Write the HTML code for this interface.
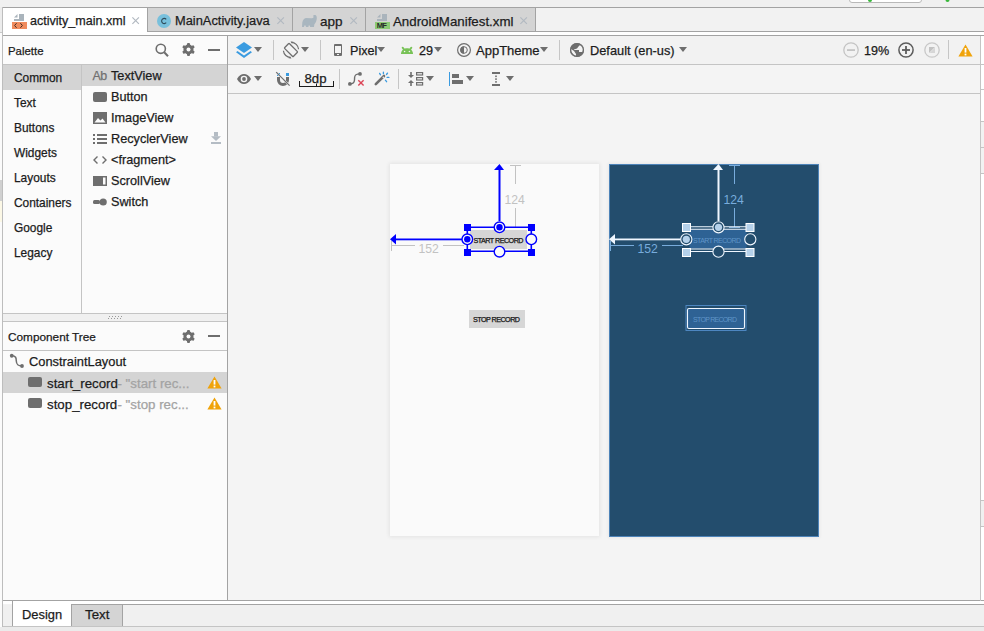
<!DOCTYPE html>
<html><head><meta charset="utf-8"><style>
html,body{margin:0;padding:0;}
body{width:984px;height:631px;position:relative;overflow:hidden;background:#f2f2f2;font-family:"Liberation Sans",sans-serif;}
.t{position:absolute;white-space:pre;font-family:"Liberation Sans",sans-serif;-webkit-text-stroke:0.25px currentColor;}
svg{overflow:visible;}
</style></head><body>
<div style="position:absolute;left:0px;top:0px;width:984px;height:7px;background:#f0f0f0;"></div>
<div style="position:absolute;left:849px;top:-4px;width:73px;height:7px;background:#ffffff;border:1px solid #b9b9b9;border-radius:3px;box-sizing:border-box;"></div>
<svg style="position:absolute;left:866px;top:-2px;" width="80" height="5" viewBox="0 0 80 5"><circle cx="4" cy="2" r="2" fill="#38b83a"/><rect x="18" y="0" width="1" height="2" fill="#333"/><rect x="26" y="0" width="1" height="2" fill="#333"/><circle cx="81.5" cy="2" r="2" fill="#38b83a"/></svg>
<div style="position:absolute;left:2px;top:7px;width:982px;height:1px;background:#a3a3a3;"></div>
<div style="position:absolute;left:0px;top:7px;width:2px;height:25px;background:#ececec;"></div>
<div style="position:absolute;left:0px;top:32px;width:2px;height:1px;background:#c8c8c8;"></div>
<div style="position:absolute;left:0px;top:33px;width:2px;height:147px;background:#fbfbfb;"></div>
<div style="position:absolute;left:0px;top:180px;width:2px;height:21px;background:#d0d0d0;"></div>
<div style="position:absolute;left:0px;top:201px;width:2px;height:21px;background:#fcf8e6;"></div>
<div style="position:absolute;left:0px;top:222px;width:2px;height:409px;background:#fbfbfb;"></div>
<div style="position:absolute;left:2px;top:8px;width:982px;height:24px;background:#f2f2f2;"></div>
<div style="position:absolute;left:2px;top:31px;width:982px;height:1px;background:#a3a3a3;"></div>
<div style="position:absolute;left:2px;top:32px;width:982px;height:3px;background:#ffffff;"></div>
<div style="position:absolute;left:2px;top:35px;width:982px;height:1px;background:#a3a3a3;"></div>
<div style="position:absolute;left:2px;top:7px;width:1px;height:624px;background:#bdbdbd;"></div>
<div style="position:absolute;left:3px;top:8px;width:144px;height:27px;background:#ffffff;"></div>
<div style="position:absolute;left:147px;top:8px;width:1px;height:24px;background:#a3a3a3;"></div>
<div style="position:absolute;left:148px;top:8px;width:144px;height:23px;background:#d4d4d4;"></div>
<div style="position:absolute;left:292px;top:8px;width:1px;height:24px;background:#a3a3a3;"></div>
<div style="position:absolute;left:293px;top:8px;width:72px;height:23px;background:#d4d4d4;"></div>
<div style="position:absolute;left:365px;top:8px;width:1px;height:24px;background:#a3a3a3;"></div>
<div style="position:absolute;left:366px;top:8px;width:169px;height:23px;background:#d4d4d4;"></div>
<div style="position:absolute;left:535px;top:8px;width:1px;height:24px;background:#a3a3a3;"></div>
<svg style="position:absolute;left:12px;top:14px;" width="16" height="15" viewBox="0 0 16 15"><path d="M2 3.5L5.5 0V3.5Z" fill="#aab4bc"/><path d="M7 0H12V7H2V5H7Z" fill="#aab4bc"/><rect x="0" y="8" width="15" height="7" fill="#f08c5e"/><path d="M4.6 9.2L2.6 11.5L4.6 13.8M8.4 9.2L10.4 11.5L8.4 13.8" stroke="#4a3128" stroke-width="1" fill="none"/></svg>
<div class="t" style="left:30px;top:15.38px;font-size:12.55px;line-height:12.55px;color:#1c1c1c;">activity_main.xml</div>
<svg style="position:absolute;left:132px;top:17px;" width="8" height="8" viewBox="0 0 8 8"><path d="M0.4 0.4L6.9 6.9M6.9 0.4L0.4 6.9" stroke="#b2b9c1" stroke-width="1.15"/></svg>
<svg style="position:absolute;left:157px;top:14px;" width="14" height="14" viewBox="0 0 14 14"><circle cx="7" cy="7" r="7" fill="#78c0dc"/><path d="M9.2 5.3A2.6 2.6 0 1 0 9.2 8.7" stroke="#2f4b5a" stroke-width="1.1" fill="none"/></svg>
<div class="t" style="left:175px;top:15.12px;font-size:12.85px;line-height:12.85px;color:#1c1c1c;">MainActivity.java</div>
<svg style="position:absolute;left:277px;top:17px;" width="8" height="8" viewBox="0 0 8 8"><path d="M0.4 0.4L6.9 6.9M6.9 0.4L0.4 6.9" stroke="#b2b9c1" stroke-width="1.15"/></svg>
<svg style="position:absolute;left:299px;top:12px;" width="22" height="18" viewBox="0 0 22 18"><path d="M3 15L3.3 10.5C3.8 8 5 6.3 7 6L12.5 6.2C13.5 6.3 14.2 6 14.5 5.5L14.4 4.2C14.2 3.4 14.5 2.9 15.2 2.9L16.3 3.1C17.5 3.5 17.9 5 17.8 6.5C17.6 9 16.5 11 15.3 12.5L15 15H11.2L10.8 13.6H9.6L9.4 15H7L6.6 13.6H5.3L5 15Z" fill="#a9b6bf"/></svg>
<div class="t" style="left:320px;top:14.57px;font-size:13.5px;line-height:13.5px;color:#1c1c1c;">app</div>
<svg style="position:absolute;left:350px;top:17px;" width="8" height="8" viewBox="0 0 8 8"><path d="M0.4 0.4L6.9 6.9M6.9 0.4L0.4 6.9" stroke="#b2b9c1" stroke-width="1.15"/></svg>
<svg style="position:absolute;left:375px;top:14px;" width="16" height="15" viewBox="0 0 16 15"><path d="M2 3.5L5.5 0V3.5Z" fill="#aab4bc"/><path d="M7 0H12V7H2V5H7Z" fill="#aab4bc"/><rect x="0" y="8" width="15" height="7" fill="#8ccb76"/><text x="1.8" y="14.2" font-family="Liberation Sans" font-weight="bold" font-size="7.6" fill="#2b2b2b" textLength="10">MF</text></svg>
<div class="t" style="left:393px;top:14.74px;font-size:13.3px;line-height:13.3px;color:#1c1c1c;">AndroidManifest.xml</div>
<svg style="position:absolute;left:520px;top:17px;" width="8" height="8" viewBox="0 0 8 8"><path d="M0.4 0.4L6.9 6.9M6.9 0.4L0.4 6.9" stroke="#b2b9c1" stroke-width="1.15"/></svg>
<div style="position:absolute;left:3px;top:36px;width:224px;height:28px;background:#fbfbfb;"></div>
<div style="position:absolute;left:227px;top:36px;width:1px;height:565px;background:#a3a3a3;"></div>
<div style="position:absolute;left:3px;top:64px;width:224px;height:1px;background:#c4c4c4;"></div>
<div class="t" style="left:8px;top:46.35px;font-size:11.4px;line-height:11.4px;color:#1c1c1c;">Palette</div>
<svg style="position:absolute;left:155px;top:43px;" width="14" height="15" viewBox="0 0 14 15"><circle cx="5.8" cy="5.8" r="4.6" stroke="#6e6e6e" stroke-width="1.6" fill="none"/><path d="M9.2 9.3L13 13.3" stroke="#6e6e6e" stroke-width="2" /></svg>
<svg style="position:absolute;left:182px;top:43px;" width="13" height="13" viewBox="0 0 13 13"><g transform="translate(6.5 6.5)" fill="#6e6e6e"><circle r="5"/><rect x="-1.5" y="-6.5" width="3" height="3" rx="1" transform="rotate(0)"/><rect x="-1.5" y="-6.5" width="3" height="3" rx="1" transform="rotate(60)"/><rect x="-1.5" y="-6.5" width="3" height="3" rx="1" transform="rotate(120)"/><rect x="-1.5" y="-6.5" width="3" height="3" rx="1" transform="rotate(180)"/><rect x="-1.5" y="-6.5" width="3" height="3" rx="1" transform="rotate(240)"/><rect x="-1.5" y="-6.5" width="3" height="3" rx="1" transform="rotate(300)"/><circle r="2" fill="#fbfbfb"/></g></svg>
<div style="position:absolute;left:208px;top:49px;width:12px;height:2px;background:#6e6e6e;"></div>
<div style="position:absolute;left:3px;top:65px;width:78px;height:249px;background:#fbfbfb;"></div>
<div style="position:absolute;left:81px;top:65px;width:1px;height:249px;background:#c4c4c4;"></div>
<div style="position:absolute;left:82px;top:65px;width:145px;height:249px;background:#fbfbfb;"></div>
<div style="position:absolute;left:3px;top:65px;width:78px;height:25px;background:#d4d4d4;"></div>
<div class="t" style="left:14px;top:72.93px;font-size:11.9px;line-height:11.9px;color:#1c1c1c;">Common</div>
<div class="t" style="left:14px;top:97.93px;font-size:11.9px;line-height:11.9px;color:#1c1c1c;">Text</div>
<div class="t" style="left:14px;top:122.93px;font-size:11.9px;line-height:11.9px;color:#1c1c1c;">Buttons</div>
<div class="t" style="left:14px;top:147.93px;font-size:11.9px;line-height:11.9px;color:#1c1c1c;">Widgets</div>
<div class="t" style="left:14px;top:172.93px;font-size:11.9px;line-height:11.9px;color:#1c1c1c;">Layouts</div>
<div class="t" style="left:14px;top:197.93px;font-size:11.9px;line-height:11.9px;color:#1c1c1c;">Containers</div>
<div class="t" style="left:14px;top:222.93px;font-size:11.9px;line-height:11.9px;color:#1c1c1c;">Google</div>
<div class="t" style="left:14px;top:247.93px;font-size:11.9px;line-height:11.9px;color:#1c1c1c;">Legacy</div>
<div style="position:absolute;left:82px;top:65px;width:145px;height:21px;background:#d4d4d4;"></div>
<div class="t" style="left:111px;top:70.25px;font-size:12.7px;line-height:12.7px;color:#1c1c1c;">TextView</div>
<div class="t" style="left:111px;top:91.25px;font-size:12.7px;line-height:12.7px;color:#1c1c1c;">Button</div>
<div class="t" style="left:111px;top:112.25px;font-size:12.7px;line-height:12.7px;color:#1c1c1c;">ImageView</div>
<div class="t" style="left:111px;top:133.25px;font-size:12.7px;line-height:12.7px;color:#1c1c1c;">RecyclerView</div>
<div class="t" style="left:111px;top:154.25px;font-size:12.7px;line-height:12.7px;color:#1c1c1c;">&lt;fragment&gt;</div>
<div class="t" style="left:111px;top:175.25px;font-size:12.7px;line-height:12.7px;color:#1c1c1c;">ScrollView</div>
<div class="t" style="left:111px;top:196.25px;font-size:12.7px;line-height:12.7px;color:#1c1c1c;">Switch</div>
<div class="t" style="left:92.5px;top:70.10px;font-size:12.4px;line-height:12.4px;color:#707070;letter-spacing:-0.4px;">Ab</div>
<div style="position:absolute;left:93px;top:92px;width:14px;height:10px;background:#6e6e6e;border-radius:2px;"></div>
<svg style="position:absolute;left:93px;top:112px;" width="14" height="12" viewBox="0 0 14 12"><rect x="0" y="0" width="14" height="12" fill="#6e6e6e"/><path d="M1.5 10.5L5 6L7.5 8.5L9.5 6.5L12.5 10.5Z" fill="#fbfbfb"/></svg>
<svg style="position:absolute;left:93px;top:133px;" width="14" height="12" viewBox="0 0 14 12"><g fill="#6e6e6e"><rect x="0" y="1" width="2" height="2"/><rect x="4" y="1" width="10" height="2"/><rect x="0" y="5" width="2" height="2"/><rect x="4" y="5" width="10" height="2"/><rect x="0" y="9" width="2" height="2"/><rect x="4" y="9" width="10" height="2"/></g></svg>
<svg style="position:absolute;left:93px;top:156px;" width="14" height="8" viewBox="0 0 14 8"><path d="M4.5 0.5L1 4L4.5 7.5M9.5 0.5L13 4L9.5 7.5" stroke="#6e6e6e" stroke-width="1.4" fill="none"/></svg>
<svg style="position:absolute;left:93px;top:176px;" width="14" height="10" viewBox="0 0 14 10"><rect x="0" y="0" width="14" height="10" fill="#6e6e6e"/><rect x="10" y="1.5" width="2.5" height="7" fill="#fbfbfb"/></svg>
<svg style="position:absolute;left:93px;top:198px;" width="14" height="8" viewBox="0 0 14 8"><rect x="0" y="2" width="7" height="4" rx="1.5" fill="#6e6e6e"/><circle cx="10.2" cy="4" r="3.6" fill="#6e6e6e"/></svg>
<svg style="position:absolute;left:211px;top:131px;" width="10" height="14" viewBox="0 0 10 14"><rect x="3" y="1" width="4" height="4.5" fill="#b4bcc4"/><path d="M0 5.2H10L5 10Z" fill="#b4bcc4"/><rect x="0" y="11" width="10" height="2" fill="#b4bcc4"/></svg>
<div style="position:absolute;left:3px;top:313px;width:224px;height:1px;background:#c4c4c4;"></div>
<div style="position:absolute;left:3px;top:314px;width:224px;height:7px;background:#f0f0f0;"></div>
<svg style="position:absolute;left:107px;top:316px;" width="16" height="3" viewBox="0 0 16 3"><rect x="2" y="0" width="1" height="1" fill="#9a9a9a"/><rect x="1" y="2" width="1" height="1" fill="#9a9a9a"/><rect x="5" y="0" width="1" height="1" fill="#9a9a9a"/><rect x="4" y="2" width="1" height="1" fill="#9a9a9a"/><rect x="8" y="0" width="1" height="1" fill="#9a9a9a"/><rect x="7" y="2" width="1" height="1" fill="#9a9a9a"/><rect x="11" y="0" width="1" height="1" fill="#9a9a9a"/><rect x="10" y="2" width="1" height="1" fill="#9a9a9a"/><rect x="14" y="0" width="1" height="1" fill="#9a9a9a"/><rect x="13" y="2" width="1" height="1" fill="#9a9a9a"/></svg>
<div style="position:absolute;left:3px;top:321px;width:224px;height:1px;background:#c4c4c4;"></div>
<div style="position:absolute;left:3px;top:322px;width:224px;height:28px;background:#fbfbfb;"></div>
<div style="position:absolute;left:3px;top:350px;width:224px;height:1px;background:#c4c4c4;"></div>
<div class="t" style="left:8px;top:332.01px;font-size:11.8px;line-height:11.8px;color:#1c1c1c;">Component Tree</div>
<svg style="position:absolute;left:181.5px;top:329.5px;" width="13" height="13" viewBox="0 0 13 13"><g transform="translate(6.5 6.5)" fill="#6e6e6e"><circle r="5"/><rect x="-1.5" y="-6.5" width="3" height="3" rx="1" transform="rotate(0)"/><rect x="-1.5" y="-6.5" width="3" height="3" rx="1" transform="rotate(60)"/><rect x="-1.5" y="-6.5" width="3" height="3" rx="1" transform="rotate(120)"/><rect x="-1.5" y="-6.5" width="3" height="3" rx="1" transform="rotate(180)"/><rect x="-1.5" y="-6.5" width="3" height="3" rx="1" transform="rotate(240)"/><rect x="-1.5" y="-6.5" width="3" height="3" rx="1" transform="rotate(300)"/><circle r="2" fill="#fbfbfb"/></g></svg>
<div style="position:absolute;left:208px;top:335px;width:12px;height:2px;background:#6e6e6e;"></div>
<div style="position:absolute;left:3px;top:351px;width:224px;height:250px;background:#fbfbfb;"></div>
<div style="position:absolute;left:3px;top:372px;width:224px;height:21px;background:#d4d4d4;"></div>
<svg style="position:absolute;left:6px;top:350px;" width="24" height="22" viewBox="0 0 24 22"><path d="M5.75 5.75C10 5.75 10.2 8 10.3 11C10.5 14.5 11.5 16 16 16" stroke="#6e6e6e" stroke-width="1.5" fill="none"/><circle cx="5.75" cy="5.75" r="1.9" fill="#6e6e6e"/><circle cx="16" cy="16" r="1.9" fill="#6e6e6e"/></svg>
<div class="t" style="left:29px;top:356.12px;font-size:12.85px;line-height:12.85px;color:#1c1c1c;">ConstraintLayout</div>
<div style="position:absolute;left:28px;top:377px;width:14px;height:10px;background:#6e6e6e;border-radius:2px;"></div>
<div style="position:absolute;left:28px;top:398px;width:14px;height:10px;background:#6e6e6e;border-radius:2px;"></div>
<div class="t" style="left:47px;top:376.74px;font-size:13.3px;line-height:13.3px;color:#1c1c1c;">start_record</div>
<div class="t" style="left:47px;top:397.74px;font-size:13.3px;line-height:13.3px;color:#1c1c1c;">stop_record</div>
<div class="t" style="left:117.5px;top:376.74px;font-size:13.3px;line-height:13.3px;color:#a3a3a3;">- "start rec...</div>
<div class="t" style="left:117.5px;top:397.74px;font-size:13.3px;line-height:13.3px;color:#a3a3a3;">- "stop rec...</div>
<svg style="position:absolute;left:206.5px;top:375.5px;" width="15" height="13" viewBox="0 0 15 13"><path d="M7.5 0.5L14.6 12.5H0.4Z" fill="#f0a30a"/><rect x="6.6" y="4" width="1.8" height="4.6" fill="#fff"/><rect x="6.6" y="9.6" width="1.8" height="1.8" fill="#fff"/></svg>
<svg style="position:absolute;left:206.5px;top:396.5px;" width="15" height="13" viewBox="0 0 15 13"><path d="M7.5 0.5L14.6 12.5H0.4Z" fill="#f0a30a"/><rect x="6.6" y="4" width="1.8" height="4.6" fill="#fff"/><rect x="6.6" y="9.6" width="1.8" height="1.8" fill="#fff"/></svg>
<div style="position:absolute;left:3px;top:600px;width:981px;height:1px;background:#a3a3a3;"></div>
<div style="position:absolute;left:3px;top:601px;width:981px;height:3px;background:#ffffff;"></div>
<div style="position:absolute;left:12px;top:604px;width:972px;height:1px;background:#a3a3a3;"></div>
<div style="position:absolute;left:3px;top:605px;width:981px;height:21px;background:#f0f0f0;"></div>
<div style="position:absolute;left:3px;top:626px;width:981px;height:1px;background:#c4c4c4;"></div>
<div style="position:absolute;left:0px;top:627px;width:984px;height:4px;background:#ebebeb;"></div>
<div style="position:absolute;left:12px;top:601px;width:1px;height:25px;background:#a3a3a3;"></div>
<div style="position:absolute;left:13px;top:601px;width:58px;height:25px;background:#ffffff;"></div>
<div style="position:absolute;left:71px;top:604px;width:1px;height:22px;background:#a3a3a3;"></div>
<div style="position:absolute;left:72px;top:605px;width:50px;height:21px;background:#d4d4d4;"></div>
<div style="position:absolute;left:122px;top:604px;width:1px;height:22px;background:#a3a3a3;"></div>
<div class="t" style="left:22px;top:609.08px;font-size:12.9px;line-height:12.9px;color:#1c1c1c;">Design</div>
<div class="t" style="left:85px;top:607.74px;font-size:13.3px;line-height:13.3px;color:#1c1c1c;">Text</div>
<div style="position:absolute;left:228px;top:36px;width:753px;height:28px;background:#f2f2f2;"></div>
<div style="position:absolute;left:228px;top:64px;width:756px;height:1px;background:#c4c4c4;"></div>
<div style="position:absolute;left:228px;top:65px;width:753px;height:28px;background:#f4f4f4;"></div>
<div style="position:absolute;left:228px;top:93px;width:753px;height:1px;background:#c4c4c4;"></div>
<div style="position:absolute;left:228px;top:94px;width:753px;height:506px;background:#f4f4f4;"></div>
<div style="position:absolute;left:980px;top:36px;width:1px;height:565px;background:#c4c4c4;"></div>
<div style="position:absolute;left:981px;top:36px;width:3px;height:53px;background:#ffffff;"></div>
<div style="position:absolute;left:981px;top:89px;width:3px;height:1px;background:#c4c4c4;"></div>
<div style="position:absolute;left:981px;top:90px;width:3px;height:31px;background:#ffffff;"></div>
<div style="position:absolute;left:981px;top:121px;width:3px;height:1px;background:#c4c4c4;"></div>
<div style="position:absolute;left:981px;top:122px;width:3px;height:25px;background:#f2f2f2;"></div>
<div style="position:absolute;left:981px;top:147px;width:3px;height:1px;background:#c4c4c4;"></div>
<div style="position:absolute;left:981px;top:148px;width:3px;height:25px;background:#f2f2f2;"></div>
<div style="position:absolute;left:981px;top:173px;width:3px;height:1px;background:#c4c4c4;"></div>
<div style="position:absolute;left:981px;top:174px;width:3px;height:326px;background:#ffffff;"></div>
<div style="position:absolute;left:981px;top:500px;width:3px;height:1px;background:#c4c4c4;"></div>
<div style="position:absolute;left:981px;top:501px;width:3px;height:25px;background:#f0f0f0;"></div>
<div style="position:absolute;left:981px;top:526px;width:3px;height:1px;background:#c4c4c4;"></div>
<div style="position:absolute;left:981px;top:527px;width:3px;height:73px;background:#ffffff;"></div>
<div style="position:absolute;left:981px;top:64px;width:3px;height:1px;background:#c4c4c4;"></div>
<svg style="position:absolute;left:236px;top:42px;" width="16" height="16" viewBox="0 0 16 16"><path d="M8 0L16 5.5L8 11L0 5.5Z" fill="#3a9be0"/><path d="M1.5 9L8 13.5L14.5 9L16 10.2L8 16L0 10.2Z" fill="#3a9be0"/></svg>
<svg style="position:absolute;left:254px;top:47px;" width="8" height="5" viewBox="0 0 8 5"><path d="M0 0H8L4 5Z" fill="#6e6e6e"/></svg>
<div style="position:absolute;left:273px;top:40px;width:1px;height:20px;background:#c6c6c6;"></div>
<svg style="position:absolute;left:280px;top:40px;" width="23" height="20" viewBox="0 0 23 20"><g transform="rotate(-45 11 10)"><rect x="7.6" y="3.8" width="6.8" height="12.4" rx="0.8" stroke="#6e6e6e" stroke-width="1.3" fill="none"/></g><path d="M11.3 2.4A7.6 7.6 0 0 1 18.6 9.2M10.6 17.6A7.6 7.6 0 0 1 3.4 10.8" stroke="#6e6e6e" stroke-width="1.2" fill="none"/><path d="M10.5 1.6L13.5 1.8L12 3.6Z M11.5 18.4L8.5 18.2L10 16.4Z" fill="#6e6e6e"/></svg>
<svg style="position:absolute;left:301px;top:47px;" width="8" height="5" viewBox="0 0 8 5"><path d="M0 0H8L4 5Z" fill="#6e6e6e"/></svg>
<div style="position:absolute;left:320px;top:40px;width:1px;height:20px;background:#c6c6c6;"></div>
<svg style="position:absolute;left:334px;top:44px;" width="8" height="12" viewBox="0 0 8 12"><rect x="0" y="0" width="8" height="12" rx="1" fill="#6e6e6e"/><rect x="1" y="2" width="6" height="7" fill="#f4f4f4"/><rect x="3" y="10" width="2" height="1" fill="#f4f4f4"/></svg>
<div class="t" style="left:350px;top:45.34px;font-size:12.6px;line-height:12.6px;color:#1c1c1c;">Pixel</div>
<svg style="position:absolute;left:377px;top:47px;" width="8" height="5" viewBox="0 0 8 5"><path d="M0 0H8L4 5Z" fill="#6e6e6e"/></svg>
<svg style="position:absolute;left:400px;top:46px;" width="14" height="9" viewBox="0 0 14 9"><path d="M1 8C1 4.5 3.5 2.2 7 2.2C10.5 2.2 13 4.5 13 8Z" fill="#78c257"/><path d="M2.6 1.6L4.2 3.6M11.4 1.6L9.8 3.6" stroke="#78c257" stroke-width="1.8" stroke-linecap="round"/><circle cx="4.6" cy="5.5" r="0.8" fill="#f4f4f4"/><circle cx="9.4" cy="5.5" r="0.8" fill="#f4f4f4"/></svg>
<div class="t" style="left:419px;top:45.34px;font-size:12.6px;line-height:12.6px;color:#1c1c1c;">29</div>
<svg style="position:absolute;left:434px;top:47px;" width="8" height="5" viewBox="0 0 8 5"><path d="M0 0H8L4 5Z" fill="#6e6e6e"/></svg>
<svg style="position:absolute;left:457px;top:43px;" width="15" height="15" viewBox="0 0 15 15"><circle cx="7" cy="7" r="6.4" stroke="#6e6e6e" stroke-width="1.2" fill="none"/><circle cx="7" cy="7" r="3.3" stroke="#6e6e6e" stroke-width="1" fill="none"/><path d="M7 3.2A3.8 3.8 0 0 0 7 10.8Z" fill="#6e6e6e"/></svg>
<div class="t" style="left:476px;top:44.00px;font-size:13.0px;line-height:13.0px;color:#1c1c1c;">AppTheme</div>
<svg style="position:absolute;left:540px;top:47px;" width="8" height="5" viewBox="0 0 8 5"><path d="M0 0H8L4 5Z" fill="#6e6e6e"/></svg>
<div style="position:absolute;left:559px;top:40px;width:1px;height:20px;background:#c6c6c6;"></div>
<svg style="position:absolute;left:567px;top:40px;" width="20" height="20" viewBox="0 0 20 20"><circle cx="10" cy="10" r="7" fill="#6e6e6e"/><path d="M7 9.5L10 8.5L11.5 6.5L13 5L15 5.8L16.2 8.5L15.6 12L12 12V10H7Z" fill="#f4f4f4"/><path d="M4 9L7 11L9 14L9 16.2L6.5 15L4.2 12Z" fill="#f4f4f4"/><circle cx="10" cy="10" r="6.4" stroke="#6e6e6e" stroke-width="1.3" fill="none"/></svg>
<div class="t" style="left:590px;top:45.17px;font-size:12.8px;line-height:12.8px;color:#1c1c1c;">Default (en-us)</div>
<svg style="position:absolute;left:679px;top:47px;" width="8" height="5" viewBox="0 0 8 5"><path d="M0 0H8L4 5Z" fill="#6e6e6e"/></svg>
<svg style="position:absolute;left:843px;top:42px;" width="16" height="16" viewBox="0 0 16 16"><circle cx="8" cy="8" r="7.2" stroke="#c4c4c4" stroke-width="1.3" fill="none"/><rect x="4" y="7.2" width="8" height="1.8" fill="#c4c4c4"/></svg>
<div class="t" style="left:864px;top:44.84px;font-size:12.6px;line-height:12.6px;color:#1c1c1c;">19%</div>
<svg style="position:absolute;left:898px;top:42px;" width="16" height="16" viewBox="0 0 16 16"><circle cx="8" cy="8" r="7.1" stroke="#5c5c5c" stroke-width="1.5" fill="none"/><rect x="4" y="7.1" width="8" height="1.8" fill="#5c5c5c"/><rect x="7.1" y="4" width="1.8" height="8" fill="#5c5c5c"/></svg>
<svg style="position:absolute;left:924px;top:42px;" width="16" height="16" viewBox="0 0 16 16"><circle cx="8" cy="8" r="7.2" stroke="#c8c8c8" stroke-width="1.3" fill="none"/><path d="M5 5H11L5 11Z" fill="#c2c2c2"/><path d="M11 5.5V11H5.5Z" fill="#d6d6d6"/></svg>
<div style="position:absolute;left:948px;top:40px;width:1px;height:19px;background:#c6c6c6;"></div>
<svg style="position:absolute;left:957.5px;top:43.5px;" width="15" height="13" viewBox="0 0 15 13"><path d="M7.5 0.5L14.6 12.5H0.4Z" fill="#f0a30a"/><rect x="6.6" y="4" width="1.8" height="4.6" fill="#fff"/><rect x="6.6" y="9.6" width="1.8" height="1.8" fill="#fff"/></svg>
<svg style="position:absolute;left:237px;top:74px;" width="14" height="10" viewBox="0 0 14 10"><path d="M0 5C1.8 1.6 4.2 0 7 0C9.8 0 12.2 1.6 14 5C12.2 8.4 9.8 10 7 10C4.2 10 1.8 8.4 0 5Z" fill="#6e6e6e"/><circle cx="7" cy="5" r="3.3" fill="#f4f4f4"/><circle cx="7" cy="5" r="1.9" fill="#6e6e6e"/></svg>
<svg style="position:absolute;left:254px;top:76px;" width="8" height="5" viewBox="0 0 8 5"><path d="M0 0H8L4 5Z" fill="#6e6e6e"/></svg>
<svg style="position:absolute;left:272px;top:68px;" width="22" height="22" viewBox="0 0 22 22"><path d="M5 9H8V12A3 3 0 0 0 14 12V9H17V12A6 6 0 0 1 5 12Z" fill="#6e6e6e"/><rect x="5" y="5" width="3" height="3" fill="#3a9be0"/><rect x="14" y="5" width="3" height="3" fill="#3a9be0"/><path d="M4.2 4.2L17.6 17.6" stroke="#f4f4f4" stroke-width="1.9"/><path d="M4.2 4.2L17.6 17.6" stroke="#6e6e6e" stroke-width="1.2"/></svg>
<div class="t" style="left:304.5px;top:71.83px;font-size:13.2px;line-height:13.2px;color:#1c1c1c;">8dp</div>
<svg style="position:absolute;left:299px;top:81px;" width="35" height="7" viewBox="0 0 35 7"><path d="M0.5 0V6M34.5 0V6M0 5.5H35M17.5 2.5V5.5" stroke="#1c1c1c" stroke-width="1"/></svg>
<div style="position:absolute;left:339px;top:69px;width:1px;height:20px;background:#c6c6c6;"></div>
<svg style="position:absolute;left:345px;top:68px;" width="22" height="22" viewBox="0 0 22 22"><path d="M4.9 15.9C8 15.9 9.3 15 9.5 12L9.6 9.5C9.8 6.8 11 5.9 15 5.9" stroke="#6e6e6e" stroke-width="1.4" fill="none"/><circle cx="4.9" cy="15.9" r="1.9" fill="#6e6e6e"/><circle cx="15" cy="5.9" r="1.9" fill="#6e6e6e"/><path d="M13.3 12.2L18.6 17.5M18.6 12.2L13.3 17.5" stroke="#dc4657" stroke-width="1.4"/></svg>
<svg style="position:absolute;left:370px;top:68px;" width="22" height="22" viewBox="0 0 22 22"><path d="M5.8 16.2L14 8" stroke="#6e6e6e" stroke-width="2.6" stroke-linecap="round"/><circle cx="13.3" cy="9.4" r="0.8" fill="#e8e8e8"/><g stroke="#3a9be0" stroke-width="1.3" stroke-linecap="round"><path d="M9.6 5.4L10.5 6.8"/><path d="M13.4 4.1V5.7"/><path d="M17.5 5.1L16.5 6.5"/><path d="M17.1 9.4H18.9"/><path d="M15.4 12.2L16.6 13.7"/></g></svg>
<div style="position:absolute;left:398px;top:69px;width:1px;height:20px;background:#c6c6c6;"></div>
<svg style="position:absolute;left:408px;top:72px;" width="15" height="15" viewBox="0 0 15 15"><rect x="2.2" y="0" width="1.6" height="3" fill="#6e6e6e"/><path d="M0 3H6L3 6Z" fill="#6e6e6e"/><rect x="2.2" y="11" width="1.6" height="3" fill="#6e6e6e"/><path d="M0 11H6L3 8Z" fill="#6e6e6e"/><g stroke="#6e6e6e" stroke-width="1.2" fill="none"><rect x="8.6" y="0.6" width="6" height="2.4"/><rect x="8.6" y="5.6" width="6" height="2.4"/><rect x="8.6" y="10.6" width="6" height="2.4"/></g></svg>
<svg style="position:absolute;left:426px;top:76px;" width="8" height="5" viewBox="0 0 8 5"><path d="M0 0H8L4 5Z" fill="#6e6e6e"/></svg>
<div style="position:absolute;left:449px;top:72px;width:1px;height:14px;background:#3a9be0;"></div>
<div style="position:absolute;left:452px;top:74px;width:7px;height:4px;background:#6e6e6e;"></div>
<div style="position:absolute;left:452px;top:80px;width:11px;height:4px;background:#6e6e6e;"></div>
<svg style="position:absolute;left:466px;top:76px;" width="8" height="5" viewBox="0 0 8 5"><path d="M0 0H8L4 5Z" fill="#6e6e6e"/></svg>
<svg style="position:absolute;left:492px;top:72px;" width="8" height="15" viewBox="0 0 8 15"><rect x="0" y="0" width="8" height="2" fill="#6e6e6e"/><rect x="0" y="12" width="8" height="2" fill="#6e6e6e"/><rect x="3.2" y="3.5" width="1.6" height="1.6" fill="#6e6e6e"/><rect x="3.2" y="6.3" width="1.6" height="1.6" fill="#6e6e6e"/><rect x="3.2" y="9.1" width="1.6" height="1.6" fill="#6e6e6e"/></svg>
<svg style="position:absolute;left:506px;top:76px;" width="8" height="5" viewBox="0 0 8 5"><path d="M0 0H8L4 5Z" fill="#6e6e6e"/></svg>
<div style="position:absolute;left:390px;top:164px;width:209px;height:372px;background:#fafafa;box-shadow:0 0 4px 1px rgba(0,0,0,0.07)"></div>
<div style="position:absolute;left:609px;top:164px;width:210px;height:373px;background:#234d6d;box-shadow:inset 0 0 0 1px #4d83b8, 0 0 3px 1px rgba(0,0,0,0.05)"></div>
<svg style="position:absolute;left:390px;top:164px;" width="210" height="373" viewBox="0 0 210 373"><rect x="108.5" y="5" width="2" height="52" fill="#0000ff"/><path d="M104 6H114L109.5 0Z" fill="#0000ff"/><rect x="5" y="74.5" width="67" height="1.8" fill="#0000ff"/><path d="M0 75.30000000000001L6 70V80.5Z" fill="#0000ff"/><rect x="125" y="1" width="1" height="19" fill="#c2c2c2"/><rect x="120" y="1" width="11" height="1" fill="#c2c2c2"/><rect x="125" y="44" width="1" height="19" fill="#c2c2c2"/><rect x="120" y="63" width="11" height="1" fill="#c2c2c2"/><rect x="1" y="81" width="24" height="1" fill="#c2c2c2"/><rect x="1" y="77" width="1" height="10" fill="#c2c2c2"/><rect x="53" y="81" width="21" height="1" fill="#c2c2c2"/><text x="114.5" y="40" font-family="Liberation Sans" font-size="12.2" fill="#c2c2c2">124</text><text x="28.5" y="89" font-family="Liberation Sans" font-size="12.2" fill="#c2c2c2">152</text><rect x="80" y="66" width="57" height="19" fill="#d6d6d6"/><text x="83.5" y="78.5" font-family="Liberation Sans" font-size="7.2" fill="#151515" stroke="#151515" stroke-width="0.25" textLength="50">START RECORD</text><path d="M77 63.30000000000001H141.5M77 87.30000000000001H141.5M77.30000000000001 63V88M141.29999999999995 63V88" stroke="#0000ff" stroke-width="1.6" fill="none"/><rect x="74" y="60" width="7" height="7" fill="#0000ff"/><rect x="138" y="60" width="7" height="7" fill="#0000ff"/><rect x="74" y="85" width="7" height="7" fill="#0000ff"/><rect x="138" y="85" width="7" height="7" fill="#0000ff"/><circle cx="109.5" cy="63.30000000000001" r="5.3" fill="#fafafa" stroke="#0000ff" stroke-width="1.4"/><circle cx="109.5" cy="63.30000000000001" r="3.2" fill="#0000ff"/><circle cx="77.30000000000001" cy="75.30000000000001" r="5.3" fill="#fafafa" stroke="#0000ff" stroke-width="1.4"/><circle cx="77.30000000000001" cy="75.30000000000001" r="3.2" fill="#0000ff"/><circle cx="141.29999999999995" cy="75.30000000000001" r="5.3" fill="#fafafa" stroke="#0000ff" stroke-width="1.4"/><circle cx="109.5" cy="87.69999999999999" r="5.3" fill="#fafafa" stroke="#0000ff" stroke-width="1.4"/><rect x="79" y="146" width="56" height="18" fill="#d6d6d6"/><text x="83" y="158.3" font-family="Liberation Sans" font-size="7.2" fill="#151515" stroke="#151515" stroke-width="0.25" textLength="47">STOP RECORD</text></svg>
<svg style="position:absolute;left:609px;top:164px;" width="210" height="373" viewBox="0 0 210 373"><rect x="108.5" y="5" width="2" height="52" fill="#f0f7ff"/><path d="M104 6H114L109.5 0Z" fill="#f0f7ff"/><rect x="5" y="74.5" width="67" height="1.8" fill="#f0f7ff"/><path d="M0 75.30000000000001L6 70V80.5Z" fill="#f0f7ff"/><rect x="125" y="1" width="1" height="19" fill="#78acdc"/><rect x="120" y="1" width="11" height="1" fill="#78acdc"/><rect x="125" y="44" width="1" height="19" fill="#78acdc"/><rect x="120" y="63" width="11" height="1" fill="#78acdc"/><rect x="1" y="81" width="24" height="1" fill="#78acdc"/><rect x="1" y="77" width="1" height="10" fill="#78acdc"/><rect x="53" y="81" width="21" height="1" fill="#78acdc"/><text x="114.5" y="40" font-family="Liberation Sans" font-size="12.2" fill="#78acdc">124</text><text x="28.5" y="89" font-family="Liberation Sans" font-size="12.2" fill="#78acdc">152</text><rect x="80.5" y="65.5" width="57" height="19" fill="#2e6294"/><text x="84" y="78.5" font-family="Liberation Sans" font-size="7" fill="#5f95c8" textLength="48">START RECORD</text><path d="M77 62.80000000000001H141.5M77 65.30000000000001H141.5M77 85H141.5M77 87.5H141.5" stroke="#f0f7ff" stroke-width="1.1" fill="none"/><rect x="73.5" y="59.5" width="8" height="8" fill="#b5d1ea" stroke="#ffffff" stroke-width="1"/><rect x="137.0" y="59.5" width="8" height="8" fill="#b5d1ea" stroke="#ffffff" stroke-width="1"/><rect x="73.5" y="84.5" width="8" height="8" fill="#b5d1ea" stroke="#ffffff" stroke-width="1"/><rect x="137.0" y="84.5" width="8" height="8" fill="#b5d1ea" stroke="#ffffff" stroke-width="1"/><circle cx="109.5" cy="63.30000000000001" r="5.6" fill="#234d6d" stroke="#f0f7ff" stroke-width="1.1"/><circle cx="109.5" cy="63.30000000000001" r="3.6" fill="#b5d1ea"/><circle cx="77.30000000000001" cy="75.30000000000001" r="5.6" fill="#234d6d" stroke="#f0f7ff" stroke-width="1.1"/><circle cx="77.30000000000001" cy="75.30000000000001" r="3.6" fill="#b5d1ea"/><circle cx="141.29999999999995" cy="75.30000000000001" r="5.6" fill="#234d6d" stroke="#f0f7ff" stroke-width="1.1"/><circle cx="109.5" cy="87.69999999999999" r="5.6" fill="#234d6d" stroke="#f0f7ff" stroke-width="1.1"/><rect x="77" y="141.5" width="60" height="25" fill="none" stroke="#4d86c0" stroke-width="1"/><rect x="78.5" y="144.5" width="57" height="20" rx="1.5" fill="#2e6294" stroke="#f0f7ff" stroke-width="1.1"/><text x="84" y="158.3" font-family="Liberation Sans" font-size="7" fill="#5f95c8" textLength="44">STOP RECORD</text></svg>
</body></html>
